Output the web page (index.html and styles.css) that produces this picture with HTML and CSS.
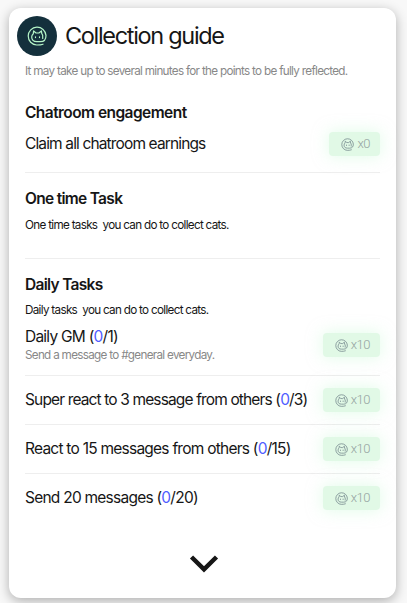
FILE: index.html
```
<!DOCTYPE html>
<html lang="en">
<head>
<meta charset="utf-8">
<title>Collection guide</title>
<link rel="stylesheet" href="styles.css">
</head>
<body>
<svg class="defs" aria-hidden="true">
  <symbol id="cat" viewBox="0 0 20 20">
    <g fill="none" stroke="currentColor" stroke-linecap="round" stroke-linejoin="round">
      <path d="M16 18.200C14.200 18.900 12 19 9.700 19A8.900 8.900 0 1 1 19 9.400C19 13.600 17 15.600 13.400 15.600H9.800C6.200 15.600 4.700 13.600 4.700 11C4.700 9.300 5.300 8.500 6.300 7.700L6.600 4.900L9 7H11.900L14.400 4.900L14.800 7.700C15.700 8.800 16 9.700 15.700 11V12.500"/>
      <path d="M8.500 10.800V11.600M12.500 10.800V11.600"/>
    </g>
  </symbol>
</svg>
<main class="card">
  <header class="head">
    <div class="logo"><svg><use href="#cat"/></svg></div>
    <h1>Collection guide</h1>
  </header>
  <div class="content">
    <p class="note">It may take up to several minutes for the points to be fully reflected.</p>
    <section class="chatroom">
      <h2>Chatroom engagement</h2>
      <div class="task">
        <span class="name">Claim all chatroom earnings</span>
        <span class="badge"><svg><use href="#cat"/></svg>x0</span>
      </div>
    </section>
    <section class="once">
      <h2 class="tight">One time Task</h2>
      <p class="desc once-desc">One time tasks &nbsp;you can do to collect cats.</p>
    </section>
    <section class="daily">
      <h2 class="tight">Daily Tasks</h2>
      <p class="desc daily-desc">Daily tasks &nbsp;you can do to collect cats.</p>
      <div class="task gm">
        <div><div class="name loose">Daily GM (<b>0</b>/1)</div><p class="hint">Send a message to #general everyday.</p></div>
        <span class="badge"><svg><use href="#cat"/></svg>x10</span>
      </div>
      <div class="task row">
        <span class="name">Super react to 3 message from others (<b>0</b>/3)</span>
        <span class="badge"><svg><use href="#cat"/></svg>x10</span>
      </div>
      <div class="task row">
        <span class="name loose">React to 15 messages from others (<b>0</b>/15)</span>
        <span class="badge"><svg><use href="#cat"/></svg>x10</span>
      </div>
      <div class="task row last">
        <span class="name loose">Send 20 messages (<b>0</b>/20)</span>
        <span class="badge"><svg><use href="#cat"/></svg>x10</span>
      </div>
    </section>
  </div>
  <svg class="chevron" viewBox="0 0 30 20"><path d="M2.500 3L15 15.300L27.500 3" fill="none" stroke="currentColor" stroke-width="4.500"/></svg>
</main>
</body>
</html>
```
FILE: styles.css
```
* { box-sizing: border-box; }
body {
  margin: 0;
  height: 603px;
  padding: 8px 11px 5px 9px;
  overflow: hidden;
  background: #f8f8f8;
  color: #161616;
  font-family: Inter, "Liberation Sans", sans-serif;
}
h1, h2, p { margin: 0; }
.defs { display: block; width: 0; height: 0; }
.card {
  height: 590px;
  padding: 8px;
  border-radius: 12px;
  background: #fff;
  box-shadow: 0 3px 12px rgba(0, 0, 0, .3);
}
.head { display: flex; align-items: center; gap: 8px; height: 40px; }
.logo {
  display: grid;
  place-items: center;
  width: 40px;
  height: 40px;
  border-radius: 50%;
  background: #14303c;
  color: #b5f5c8;
}
.logo svg { width: 20px; height: 20px; stroke-width: 1.200; }
h1 { font-size: 23.5px; line-height: 32px; font-weight: 400; letter-spacing: -1.32px; }
.content { padding: 0 8px; }
.note, .desc, .hint { font-size: 11.7px; line-height: 16px; letter-spacing: -.7px; white-space: nowrap; }
.note, .hint { color: #888; }
.note { margin-top: 7px; }
h2 { font-size: 15.5px; line-height: 20px; font-weight: 600; letter-spacing: -.55px; }
h2.tight { letter-spacing: -.7px; }
.chatroom { height: 70px; margin-top: 24px; border-bottom: 1px solid #eee; }
.chatroom .task { margin-top: 9px; height: 24px; }
.once { height: 86px; padding-top: 16px; border-bottom: 1px solid #eee; }
.once-desc { margin-top: 8px; }
.daily { padding-top: 16px; }
.daily-desc { margin-top: 7px; }
.task { display: flex; align-items: center; justify-content: space-between; }
.name { font-size: 15.5px; line-height: 20px; letter-spacing: -.86px; white-space: nowrap; }
.name.loose { letter-spacing: -.76px; }
.name b { font-weight: 400; color: #4f5dff; }
.gm { height: 58px; border-bottom: 1px solid #eee; padding-bottom: 3px; }
.row { height: 49px; border-bottom: 1px solid #eee; }
.last { border-color: transparent; }
.badge {
  display: flex;
  align-items: center;
  gap: 4px;
  height: 24px;
  padding: 0 10px 0 12px;
  border-radius: 4px;
  background: #e1f9e6;
  box-shadow: 0 0 16px rgba(193, 249, 209, .5);
  color: #95a3a1;
  font: 300 13px/24px Roboto, sans-serif;
  letter-spacing: -.5px;
}
.badge svg { width: 13px; height: 13px; color: #72868b; stroke-width: 1.200; margin-right: -1px; }
.chevron { display: block; width: 30px; height: 20px; margin: 31px auto 0; transform: translateX(1px); }
```
